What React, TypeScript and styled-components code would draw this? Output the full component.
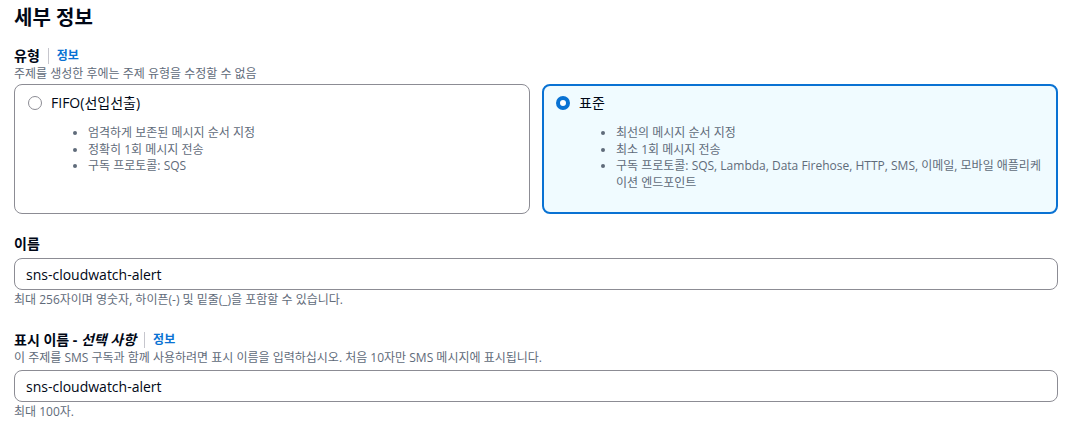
import React from "react";
import styled, { createGlobalStyle } from "styled-components";

const Global = createGlobalStyle`
  html, body { margin: 0; padding: 0; background: #ffffff; }
  body {
    font-family: "Open Sans", "Noto Sans CJK KR", sans-serif;
    color: #000716;
  }
  * { box-sizing: border-box; }
`;

const Page = styled.div`
  padding: 4px 19px 0 14px;
  display: flex;
  flex-direction: column;
`;

const Title = styled.h2`
  margin: 0;
  font-size: 20px;
  line-height: 28px;
  font-weight: 700;
  color: #000716;
`;

const Field = styled.div<{ $top: number }>`
  display: flex;
  flex-direction: column;
  margin-top: ${(p) => p.$top}px;
`;

const LabelRow = styled.div`
  display: flex;
  align-items: center;
  height: 20px;
`;

const Label = styled.span`
  font-size: 14px;
  font-weight: 700;
  line-height: 20px;
  color: #000716;
  em { font-style: italic; font-weight: 700; }
`;

const Divider = styled.span`
  width: 1px;
  height: 16px;
  background: #c6c6cd;
  margin: 0 8px;
`;

const InfoLink = styled.a`
  font-size: 12px;
  font-weight: 700;
  color: #0972d3;
  text-decoration: none;
  line-height: 20px;
`;

const Desc = styled.div`
  font-size: 12px;
  line-height: 16px;
  color: #5f6b7a;
`;

const Cards = styled.div`
  display: grid;
  grid-template-columns: 1fr 1fr;
  gap: 12px;
  margin-top: 2px;
`;

const Card = styled.div<{ $selected?: boolean }>`
  height: 130px;
  border-radius: 8px;
  border: ${(p) => (p.$selected ? "2px solid #0972d3" : "1px solid #8c8c94")};
  background: ${(p) => (p.$selected ? "#f0fbff" : "#ffffff")};
  padding: ${(p) => (p.$selected ? "7px 12px" : "8px 13px")};
`;

const CardHead = styled.div`
  display: flex;
  align-items: center;
  gap: 9px;
  height: 20px;
`;

const Radio = styled.span<{ $checked?: boolean }>`
  width: 14px;
  height: 14px;
  border-radius: 50%;
  flex: none;
  border: ${(p) => (p.$checked ? "4px solid #0972d3" : "1px solid #8c8c94")};
  background: #ffffff;
`;

const CardTitle = styled.span`
  font-size: 14px;
  line-height: 20px;
  color: #000716;
`;

const List = styled.ul`
  margin: 12px 0 0 0;
  padding: 0 0 0 60px;
  font-size: 12px;
  line-height: 16.5px;
  color: #5f6b7a;
  li::marker { color: #5f6b7a; }
`;

const Input = styled.input`
  margin-top: 4px;
  height: 32px;
  width: 100%;
  border: 1px solid #8c8c94;
  border-radius: 8px;
  padding: 0 11px;
  font-family: "Open Sans", "Noto Sans CJK KR", sans-serif;
  font-size: 14px;
  color: #000716;
  background: #ffffff;
  outline: none;
`;

const Hint = styled.div`
  margin-top: 2px;
  font-size: 12px;
  line-height: 16px;
  color: #5f6b7a;
`;

export default function App() {
  return (
    <>
      <Global />
      <Page>
        <Title>세부 정보</Title>
        <Field $top={14}>
          <LabelRow>
            <Label>유형</Label>
            <Divider />
            <InfoLink href="#">정보</InfoLink>
          </LabelRow>
          <Desc>주제를 생성한 후에는 주제 유형을 수정할 수 없음</Desc>
          <Cards>
            <Card>
              <CardHead>
                <Radio />
                <CardTitle>FIFO(선입선출)</CardTitle>
              </CardHead>
              <List>
                <li>엄격하게 보존된 메시지 순서 지정</li>
                <li>정확히 1회 메시지 전송</li>
                <li>구독 프로토콜: SQS</li>
              </List>
            </Card>
            <Card $selected>
              <CardHead>
                <Radio $checked />
                <CardTitle>표준</CardTitle>
              </CardHead>
              <List>
                <li>최선의 메시지 순서 지정</li>
                <li>최소 1회 메시지 전송</li>
                <li>
                  구독 프로토콜: SQS, Lambda, Data Firehose, HTTP, SMS, 이메일,
                  모바일 애플리케이션 엔드포인트
                </li>
              </List>
            </Card>
          </Cards>
        </Field>
        <Field $top={20}>
          <LabelRow>
            <Label>이름</Label>
          </LabelRow>
          <Input defaultValue="sns-cloudwatch-alert" />
          <Hint>최대 256자이며 영숫자, 하이픈(-) 및 밑줄(_)을 포함할 수 있습니다.</Hint>
        </Field>
        <Field $top={22}>
          <LabelRow>
            <Label>
              표시 이름 - <em>선택 사항</em>
            </Label>
            <Divider />
            <InfoLink href="#">정보</InfoLink>
          </LabelRow>
          <Desc>이 주제를 SMS 구독과 함께 사용하려면 표시 이름을 입력하십시오. 처음 10자만 SMS 메시지에 표시됩니다.</Desc>
          <Input defaultValue="sns-cloudwatch-alert" />
          <Hint>최대 100자.</Hint>
        </Field>
      </Page>
    </>
  );
}
